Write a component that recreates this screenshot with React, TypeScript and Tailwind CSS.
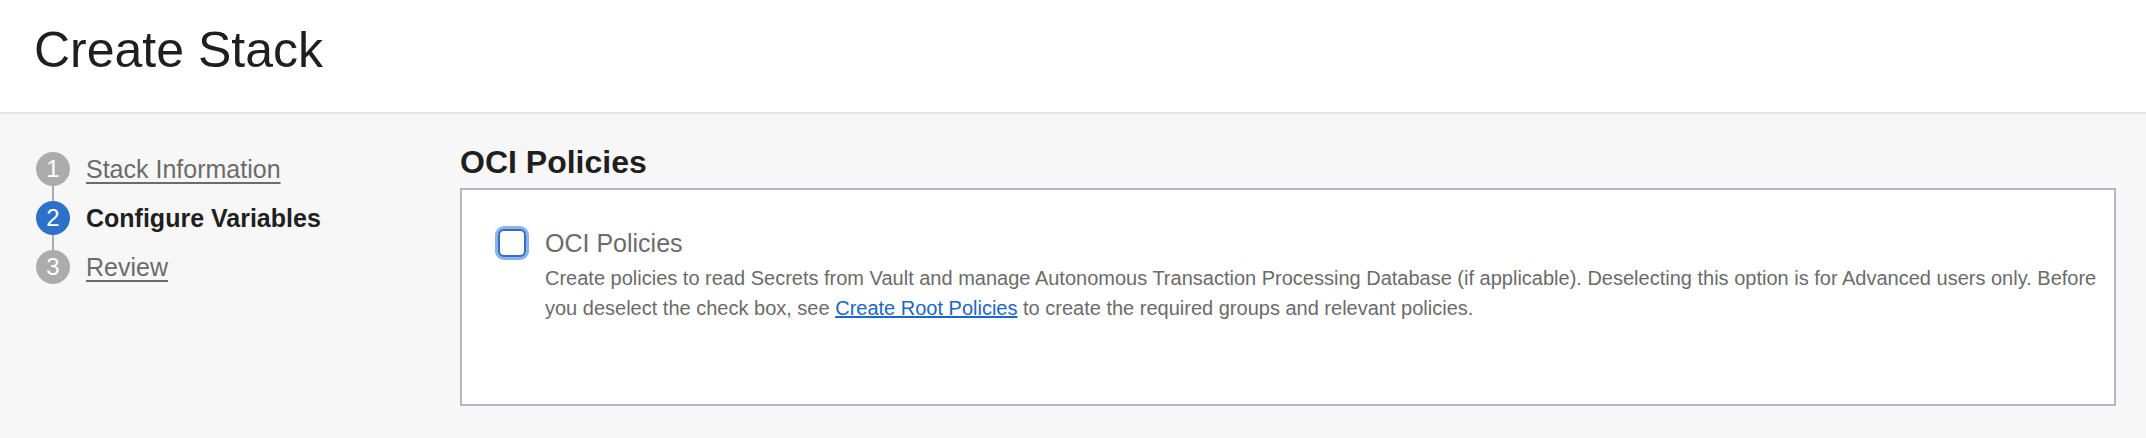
const steps = [
    { n: 1, label: "Stack Information", active: false },
    { n: 2, label: "Configure Variables", active: true },
    { n: 3, label: "Review", active: false },
];

const StepNav = () => (
    <nav className="w-[460px] shrink-0 pl-[36px] pt-[38px]">
        {steps.map((s, i) => (
            <div key={s.n}>
                {i > 0 && <div className="ml-[16px] w-[2px] h-[15px] bg-[#acacac]" />}
                <div className="flex items-center gap-[16px] h-[34px]">
                    <span
                        className={`w-[34px] h-[34px] rounded-full flex items-center justify-center text-white text-[24px] leading-none ${
                            s.active ? "bg-[#2d72c9]" : "bg-[#acacac]"
                        }`}
                    >
                        {s.n}
                    </span>
                    {s.active ? (
                        <span className="text-[25px] leading-[34px] font-bold text-[#1f1f1f]">
                            {s.label}
                        </span>
                    ) : (
                        <a
                            href="#"
                            className="text-[25px] leading-[34px] text-[#6b6b6b] underline underline-offset-4"
                        >
                            {s.label}
                        </a>
                    )}
                </div>
            </div>
        ))}
    </nav>
);

const App = () => {
    return (
        <div className="min-h-screen bg-[#f7f7f7] font-['Liberation_Sans',Arial,sans-serif]">
            <header className="h-[114px] bg-white border-b-2 border-[#e4e4e4] pl-[34px] pt-[20px]">
                <h1 className="text-[50px] leading-[60px] text-[#1f1f1f]">Create Stack</h1>
            </header>
            <div className="flex">
                <StepNav />
                <main className="flex-1 pr-[30px] pt-[28px]">
                    <h2 className="text-[32px] leading-[40px] font-bold text-[#1f1f1f] mb-[6px]">
                        OCI Policies
                    </h2>
                    <section className="bg-white border-2 border-[#b4b8bc] pt-[38px] pb-[81px] pl-[36px] pr-[16px] flex gap-[19px]">
                        <span className="mt-[1px] w-[28px] h-[28px] shrink-0 rounded-[6px] border-2 border-[#2c6fc8] bg-white ring-[3px] ring-[#8db3e6]" />
                        <div className="text-[#6b6b6b]">
                            <p className="text-[25px] leading-[30px]">OCI Policies</p>
                            <p className="mt-[5px] text-[20px] leading-[30px]">
                                Create policies to read Secrets from Vault and manage Autonomous Transaction
                                Processing Database (if applicable). Deselecting this option is for Advanced
                                users only. Before
                                <br />
                                you deselect the check box, see{" "}
                                <a href="#" className="text-[#1b66c9] underline">
                                    Create Root Policies
                                </a>{" "}
                                to create the required groups and relevant policies.
                            </p>
                        </div>
                    </section>
                </main>
            </div>
        </div>
    );
};

export default App;
